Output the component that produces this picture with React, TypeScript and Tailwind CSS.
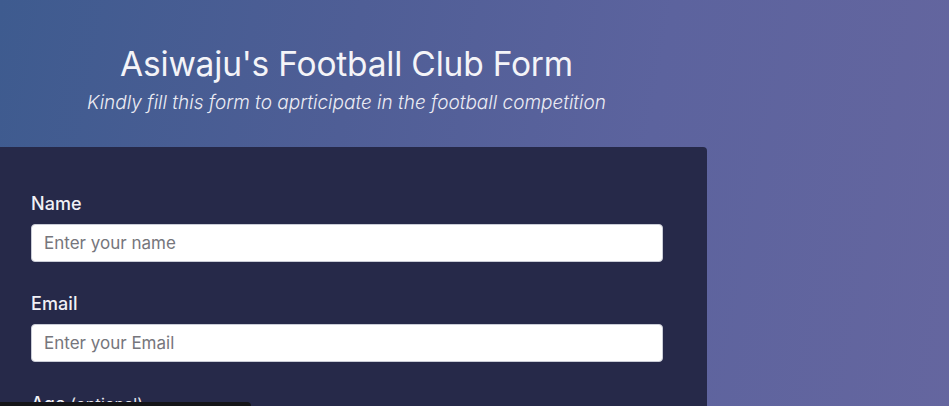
const font = { fontFamily: "Inter, 'Noto Sans', sans-serif" };

const Field = ({ label, hint, placeholder, type = "text" }: { label: string; hint?: string; placeholder?: string; type?: string }) => (
   <div className="flex flex-col">
      <label className="text-[18px] font-medium text-[#f1f1f6] leading-[26px] tracking-[0.1px]">
         {label}
         {hint && <span className="font-normal text-[16px] text-[#e6e6ee]"> {hint}</span>}
      </label>
      {placeholder && (
         <input
            type={type}
            placeholder={placeholder}
            className="mt-[7px] h-[38px] w-full rounded-[4px] border border-[#c9ccd6] bg-white px-3 text-[17px] text-[#333] placeholder:text-[#76767c] outline-none"
         />
      )}
   </div>
);

export default function App() {
   return (
      <div
         style={font}
         className="relative min-h-screen w-full overflow-hidden bg-[linear-gradient(100deg,#3e5b8f_0%,#4f5e96_35%,#5c639e_65%,#65669f_100%)]"
      >
         <header className="w-[693px] pt-[41px] pb-[30px] flex flex-col items-center text-white">
            <h1 className="text-[33.5px] font-normal leading-[46px] tracking-[-0.2px] text-[#f4f4f8]">
               Asiwaju's Football Club Form
            </h1>
            <p className="mt-[2px] text-[19px] font-light italic leading-[28px] text-[#ececf4]">
               Kindly fill this form to aprticipate in the football competition
            </p>
         </header>

         <form className="w-[707px] rounded-tr-[4px] bg-[#262949] px-[31px] pt-[44px] pb-10 flex flex-col">
            <div className="pr-[13px] flex flex-col gap-[29px]">
               <Field label="Name" placeholder="Enter your name" />
               <Field label="Email" placeholder="Enter your Email" type="email" />
               <Field label="Age" hint="(optional)" placeholder="Enter your age" type="number" />
            </div>
         </form>

         <div className="fixed bottom-0 left-0 h-[4px] w-[251px] rounded-tr-[4px] bg-[#151518]" />
      </div>
   );
}
